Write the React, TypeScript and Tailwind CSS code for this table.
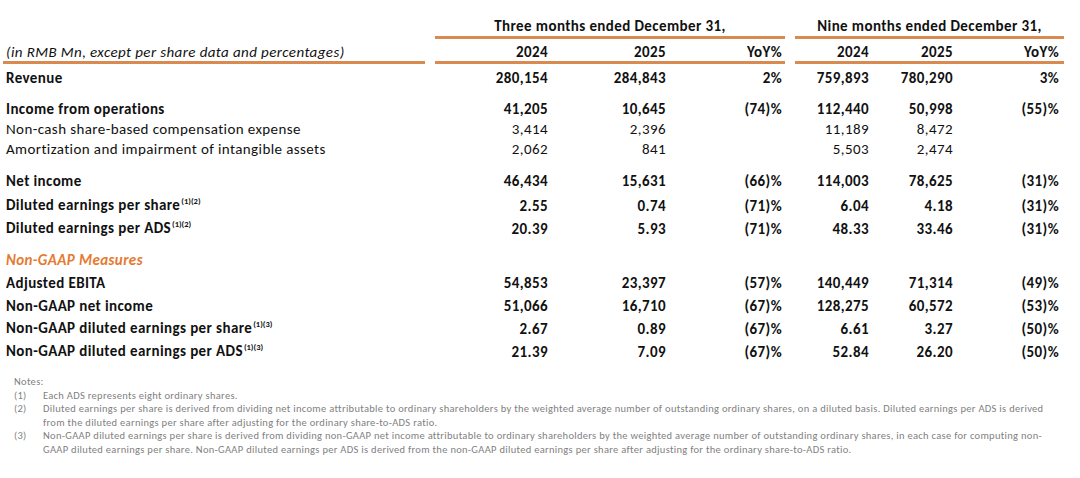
import React from "react";

type Row = {
  label: React.ReactNode;
  v: string[];
  bold?: boolean;
  cls: string;
};

const Sup = ({ t }: { t: string }) => (
  <span className="relative top-[-6px] text-[8.5px] font-bold tracking-[0px] ml-[1px]">{t}</span>
);

const rows: Row[] = [
  { label: "Revenue", v: ["280,154", "284,843", "2%", "759,893", "780,290", "3%"], bold: true, cls: "mt-[3px] h-[22px]" },
  { label: "Income from operations", v: ["41,205", "10,645", "(74)%", "112,440", "50,998", "(55)%"], bold: true, cls: "mt-[9px] h-[21px]" },
  { label: "Non-cash share-based compensation expense", v: ["3,414", "2,396", "", "11,189", "8,472", ""], cls: "h-[20px]" },
  { label: "Amortization and impairment of intangible assets", v: ["2,062", "841", "", "5,503", "2,474", ""], cls: "h-[20px]" },
  { label: "Net income", v: ["46,434", "15,631", "(66)%", "114,003", "78,625", "(31)%"], bold: true, cls: "mt-[11px] h-[22px]" },
  { label: <>Diluted earnings per share<Sup t="(1)(2)" /></>, v: ["2.55", "0.74", "(71)%", "6.04", "4.18", "(31)%"], bold: true, cls: "mt-[2px] h-[23px]" },
  { label: <>Diluted earnings per ADS<Sup t="(1)(2)" /></>, v: ["20.39", "5.93", "(71)%", "48.33", "33.46", "(31)%"], bold: true, cls: "h-[23px]" },
];

const rows2: Row[] = [
  { label: "Adjusted EBITA", v: ["54,853", "23,397", "(57)%", "140,449", "71,314", "(49)%"], bold: true, cls: "h-[23px]" },
  { label: "Non-GAAP net income", v: ["51,066", "16,710", "(67)%", "128,275", "60,572", "(53)%"], bold: true, cls: "h-[23px]" },
  { label: <>Non-GAAP diluted earnings per share<Sup t="(1)(3)" /></>, v: ["2.67", "0.89", "(67)%", "6.61", "3.27", "(50)%"], bold: true, cls: "h-[23px]" },
  { label: <>Non-GAAP diluted earnings per ADS<Sup t="(1)(3)" /></>, v: ["21.39", "7.09", "(67)%", "52.84", "26.20", "(50)%"], bold: true, cls: "h-[23px]" },
];

function DataRow({ r }: { r: Row }) {
  return (
    <div className={`flex items-center ${r.cls} ${r.bold ? "font-bold" : "font-normal"}`}>
      <div className="w-[422px] pl-[3px] whitespace-nowrap">{r.label}</div>
      <div className="w-[10px]" />
      <div className="flex w-[350px]">
        <div className="w-[113px] text-right">{r.v[0]}</div>
        <div className="w-[118px] text-right">{r.v[1]}</div>
        <div className="w-[116px] text-right">{r.v[2]}</div>
      </div>
      <div className="w-[10px]" />
      <div className="flex w-[269px]">
        <div className="w-[74px] text-right">{r.v[3]}</div>
        <div className="w-[84px] text-right">{r.v[4]}</div>
        <div className="w-[106px] text-right">{r.v[5]}</div>
      </div>
    </div>
  );
}

export default function App() {
  const line = "border-b-[3px] border-[#d98a50]";
  return (
    <div
      className="w-[1080px] h-[478px] bg-white text-[#111] pl-[3px] text-[15px] tracking-[0.4px] leading-[18px] overflow-hidden"
      style={{ fontFamily: "Carlito, Lato, 'Liberation Sans', sans-serif" }}
    >
      {/* header 1 */}
      <div className="flex font-bold">
        <div className="w-[422px]" />
        <div className="w-[10px]" />
        <div className={`w-[350px] text-center pt-[17px] pb-[1px] ${line}`}>Three months ended December 31,</div>
        <div className="w-[10px]" />
        <div className={`w-[269px] text-center pt-[17px] pb-[1px] ${line}`}>Nine months ended December 31,</div>
      </div>
      {/* header 2 */}
      <div className="flex">
        <div className={`w-[422px] pl-[3px] pt-[4px] italic whitespace-nowrap ${line}`}>
          (in RMB Mn, except per share data and percentages)
        </div>
        <div className="w-[10px]" />
        <div className={`flex w-[350px] pt-[4px] font-bold ${line}`}>
          <div className="w-[113px] text-right">2024</div>
          <div className="w-[118px] text-right">2025</div>
          <div className="w-[116px] text-right">YoY%</div>
        </div>
        <div className="w-[10px]" />
        <div className={`flex w-[269px] pt-[4px] font-bold ${line}`}>
          <div className="w-[74px] text-right">2024</div>
          <div className="w-[84px] text-right">2025</div>
          <div className="w-[106px] text-right">YoY%</div>
        </div>
      </div>

      {rows.map((r, i) => (
        <DataRow key={i} r={r} />
      ))}

      <div className="mt-[9px] h-[22px] flex items-center pl-[3px] font-bold italic text-[#e57a32]">
        Non-GAAP Measures
      </div>

      {rows2.map((r, i) => (
        <DataRow key={i} r={r} />
      ))}

      {/* notes */}
      <div className="mt-[12px] pl-[11px] text-[10.5px] tracking-[0.3px] leading-[13.6px] text-[#7f7f7f] whitespace-nowrap">
        <div>Notes:</div>
        <div className="flex">
          <div className="w-[29px]">(1)</div>
          <div>Each ADS represents eight ordinary shares.</div>
        </div>
        <div className="flex">
          <div className="w-[29px] shrink-0">(2)</div>
          <div>
            Diluted earnings per share is derived from dividing net income attributable to ordinary shareholders by the weighted average number of outstanding ordinary shares, on a diluted basis. Diluted earnings per ADS is derived
            <br />
            from the diluted earnings per share after adjusting for the ordinary share-to-ADS ratio.
          </div>
        </div>
        <div className="flex">
          <div className="w-[29px] shrink-0">(3)</div>
          <div>
            Non-GAAP diluted earnings per share is derived from dividing non-GAAP net income attributable to ordinary shareholders by the weighted average number of outstanding ordinary shares, in each case for computing non-
            <br />
            GAAP diluted earnings per share. Non-GAAP diluted earnings per ADS is derived from the non-GAAP diluted earnings per share after adjusting for the ordinary share-to-ADS ratio.
          </div>
        </div>
      </div>
    </div>
  );
}
